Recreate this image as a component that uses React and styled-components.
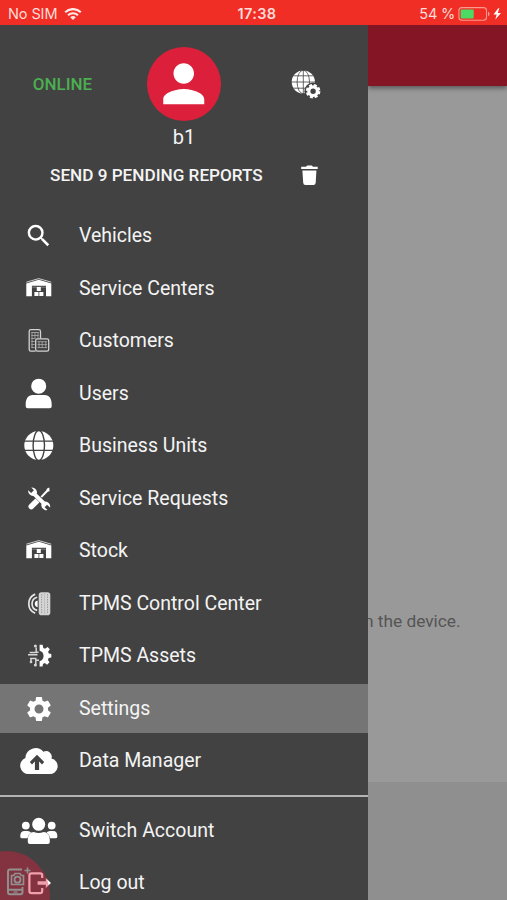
import React from "react";
import styled, { createGlobalStyle } from "styled-components";
import { MdSearch, MdSettings, MdPerson } from "react-icons/md";

const GlobalStyle = createGlobalStyle`
  * {
    box-sizing: border-box;
  }
  body {
    margin: 0;
    background: #999999;
    overflow: hidden;
  }
`;

const Screen = styled.div`
  position: relative;
  width: 507px;
  height: 900px;
  display: flex;
  flex-direction: column;
  overflow: hidden;
  font-family: Roboto, sans-serif;
`;

const StatusBar = styled.div`
  flex: none;
  height: 25px;
  display: grid;
  grid-template-columns: 1fr auto 1fr;
  align-items: center;
  padding: 3px 4px 0 8px;
  background: #f02e25;
  color: #ffdcd8;
  font-family: Inter, sans-serif;
  font-size: 14.5px;
  line-height: 20px;
`;

const StatusSide = styled.div`
  display: flex;
  align-items: center;
  justify-content: ${({ $end }) => ($end ? "flex-end" : "flex-start")};
  gap: ${({ $end }) => ($end ? "3px" : "7px")};
  letter-spacing: ${({ $end }) => ($end ? "-0.2px" : "-0.1px")};
  svg {
    display: block;
  }
`;

const Clock = styled.div`
  font-weight: 600;
  font-size: 14.5px;
  letter-spacing: 0.4px;
  padding-left: 3px;
`;

const Body = styled.div`
  flex: 1;
  min-height: 0;
  display: flex;
`;

const Drawer = styled.aside`
  flex: none;
  width: 368px;
  background: #424242;
  color: #f4f4f4;
  overflow: hidden;
`;

const Profile = styled.div`
  display: grid;
  grid-template-columns: 125px 118px 125px;
  align-items: center;
  justify-items: center;
  height: 73px;
  margin-top: 22px;
`;

const Online = styled.span`
  font-weight: 500;
  font-size: 17px;
  color: #4caf50;
`;

const Avatar = styled.div`
  width: 74px;
  height: 74px;
  border-radius: 50%;
  display: flex;
  align-items: center;
  justify-content: center;
  background: #dc1f3b;
  color: #ffffff;
`;

const UserName = styled.div`
  height: 34px;
  line-height: 34px;
  text-align: center;
  font-size: 20px;
`;

const Pending = styled.div`
  display: flex;
  align-items: center;
  justify-content: space-between;
  height: 42px;
  padding: 0 49px 0 50px;
  font-weight: 500;
  font-size: 17.15px;
`;

const Menu = styled.nav`
  display: flex;
  flex-direction: column;
  gap: 3.5px;
  padding-top: ${({ $top }) => $top}px;
`;

const Item = styled.div`
  flex: none;
  height: 49px;
  display: flex;
  align-items: center;
  gap: 20px;
  padding-left: 19px;
  font-size: 19.5px;
  line-height: 24px;
  background: ${({ $active }) => ($active ? "#757575" : "transparent")};
`;

const IconBox = styled.span`
  flex: none;
  width: 40px;
  height: 40px;
  display: flex;
  align-items: center;
  justify-content: center;
  color: #ffffff;
`;

const Divider = styled.div`
  height: 2px;
  margin-top: 9.5px;
  background: #b4b4b4;
`;

const Content = styled.main`
  flex: 1;
  min-width: 0;
  display: flex;
  flex-direction: column;
  overflow: hidden;
  background: #999999;
`;

const AppBar = styled.div`
  flex: none;
  height: 61px;
  background: #841524;
  box-shadow: 0 2px 5px rgba(0, 0, 0, 0.45);
`;

const Message = styled.div`
  flex: 1;
  padding-top: 524px;
  margin-left: -4px;
  font-size: 17.3px;
  line-height: 22px;
  white-space: nowrap;
  color: #555555;
`;

const Footer = styled.div`
  flex: none;
  height: 118px;
  background: #8f8f8f;
`;

const Fab = styled.div`
  position: absolute;
  left: -38px;
  top: 851px;
  width: 88px;
  height: 88px;
  border-radius: 50%;
  background: #dc1f3b;
  opacity: 0.42;
  svg {
    position: absolute;
    left: 44px;
    top: 16px;
  }
`;

const DARK = "#424242";

const Svg = ({ children, size = 40 }) => (
  <svg width={size} height={size} viewBox={`0 0 ${size} ${size}`} fill="#fff">
    {children}
  </svg>
);

const WarehouseIcon = () => (
  <Svg>
    <path
      d="M7.3 13.2 19.8 9.6l12.5 3.6"
      fill="none"
      stroke="#ccc"
      strokeWidth="1"
    />
    <path d="M7.3 14.4 19.8 10.8l12.5 3.6v12.8H27V16.8H12.9v10.4H7.3z" />
    <path d="M13.2 18.2H27" stroke="#bbb" strokeWidth=".5" />
    <path d="M17.8 18.1h4v3.9h-4zM15.4 22.9h4.1v4.2h-4.1zM20.3 22.9h4.1v4.2h-4.1z" />
  </Svg>
);

const BuildingsIcon = () => (
  <Svg>
    <g fill="none" stroke="#d2d2d2" strokeWidth="1.3">
      <path d="M16.5 30.1h-4.7a1.6 1.6 0 0 1-1.6-1.6V10.4q0-1.7 1.7-1.7h7.9q1.7 0 1.7 1.7v7" />
      <rect x="16.7" y="17.8" width="13" height="12.4" rx="1.7" />
    </g>
    <g stroke="#b0b0b0" strokeWidth=".8">
      <path d="M12.3 11.5h7.4M12.3 14.5h7.4M12.3 17.5h4M12.3 20.5h3.4M12.3 23.5h3.4M12.3 26.5h3.4M13 11v16M16 11v6.5M19 11v6" />
      <path d="M18.5 20.7h9.6M18.5 23.6h9.6M18.5 26.6h9.6M20 20.5v6.5M23.2 20.5v6.5M26.8 20.5v6.5" />
    </g>
  </Svg>
);

const UserIcon = () => (
  <Svg>
    <path d="M6.7 30.4c0-5.8 2.4-9.4 7-9.4h12c4.6 0 7 3.6 7 9.4v1.8q0 2-2 2h-22q-2 0-2-2z" />
    <circle cx="19.7" cy="12.2" r="8.2" stroke={DARK} strokeWidth="1.3" />
  </Svg>
);

const GlobeIcon = () => (
  <Svg>
    <circle cx="19.8" cy="19.5" r="14.5" />
    <g fill="none" stroke={DARK} strokeWidth="1.4">
      <ellipse cx="19.8" cy="19.5" rx="5.7" ry="15" />
      <path d="M5 15.1h29.6M5 24.4h29.6" />
    </g>
  </Svg>
);

const ToolsIcon = () => (
  <Svg>
    <path d="m30.3 8.6-2.2.8-1 2.1-5.6 5.9 1.4 1.3 5.7-5.8 2-1z" />
    <path
      d="m12.3 27.5 5.8-5.8"
      stroke="#fff"
      strokeWidth="5.6"
      strokeLinecap="round"
    />
    <path
      d="M12.3 8.5a5 5 0 0 1 5.5 6.3l8 7.7a5 5 0 0 1 5.3 6l-3.1-2.8-2.4 2.5 2.9 2.8a5 5 0 0 1-6-6.2l-8.1-7.9a5 5 0 0 1-5.2-5.6l2.9 2.6 2.8-2.6z"
      stroke={DARK}
      strokeWidth="1"
      paintOrder="stroke"
    />
  </Svg>
);

const TireIcon = () => (
  <Svg>
    <g fill="none" stroke="#e6e6e6" strokeWidth="1.7">
      <path d="M18.2 13.2a6.8 6.8 0 0 0 0 13.2" />
      <path d="M16.2 10.1a10.4 10.4 0 0 0 0 19.2" />
    </g>
    <path d="M18.6 16.5a3.4 3.4 0 0 0 0 6.7z" />
    <rect x="19.7" y="8.2" width="11.6" height="23" rx="2.8" fill="#d4d4d4" />
    <g stroke="#888" strokeWidth=".7">
      <path d="M22.6 10v19.5M28.5 10v19.5" strokeDasharray="1.5 1" />
      <path d="M25.5 9.5v20.5" strokeDasharray=".8 1.2" />
    </g>
  </Svg>
);

const AssetsIcon = () => (
  <Svg>
    <path d="M20.6 8.8h3l.7 3.2 1.7.8 2.6-1.7 2.2 2.2-1.7 2.5.7 1.8 2.5.4v3.5l-2.6.6-.8 1.8 1.6 2.4-2.4 2.4-2.3-1.6-1.8.8-.5 2.7h-2.9v-5.4a5.4 5.4 0 0 0 0-10.4z" />
    <g fill="none" stroke="#d5d5d5" strokeWidth="1.5">
      <path d="M9 18.8h9.5M10.6 16.4h6.6v-5M19.5 16.2h-2M11 22.5h5.8v5.5M12 22v4M20 24.3h-3" />
      <circle cx="16.4" cy="10" r=".8" />
      <circle cx="16.4" cy="29" r=".8" />
      <circle cx="12" cy="26" r=".6" />
    </g>
  </Svg>
);

const CloudIcon = () => (
  <Svg>
    <path d="M9.6 33A8.3 8.3 0 0 1 6.4 17a10.2 10.2 0 0 1 18-6.2 5.6 5.6 0 0 1 8 6.8A7.8 7.8 0 0 1 30 33z" />
    <path
      d="m18 13.7 7.2 7.4-2.2 2.3-2.9-2.9v8.6h-4.2v-8.6L13 23.4l-2.2-2.3z"
      fill={DARK}
    />
  </Svg>
);

const PeopleIcon = () => (
  <Svg>
    <circle cx="6.8" cy="14.6" r="3.9" />
    <circle cx="32.7" cy="14.6" r="3.9" />
    <path d="M1.3 24.6q0-4.7 4.2-4.7h3q2.5 0 3.5 1.5-3.2 2.5-3.6 5.9H3q-1.7 0-1.7-1.6zM38.3 24.6q0-4.7-4.2-4.7h-3q-2.5 0-3.5 1.5 3.2 2.5 3.6 5.9h5.4q1.7 0 1.7-1.6z" />
    <circle cx="19.7" cy="13.3" r="6.5" />
    <path d="M8.8 29.2c0-5.1 2.3-8.1 6-8.1 3.2 1.2 6.6 1.2 9.8 0 3.7 0 6.2 3 6.2 8.1v1.7q0 2-2 2h-18q-2 0-2-2z" />
  </Svg>
);

const LogoutIcon = () => (
  <Svg>
    <path
      d="M23.2 15v-2.6q0-2.1-2.1-2.1h-8.6q-2.1 0-2.1 2.1v15.6q0 2.1 2.1 2.1h8.6q2.1 0 2.1-2.1V25"
      fill="none"
      stroke="#fff"
      strokeWidth="2.2"
    />
    <path d="M18.6 18.2h8.2v-3.3l5.2 5.1-5.2 5.1v-3.3h-8.2z" />
  </Svg>
);

const GlobeGearIcon = () => (
  <Svg>
    <circle cx="17.3" cy="18" r="11.6" />
    <g fill="none" stroke={DARK} strokeWidth=".8">
      <ellipse cx="17.3" cy="18" rx="6.2" ry="11.8" />
      <path d="M17.3 6v24M5 18h24M7 11.8h20M7 24.2h20" />
    </g>
    <circle cx="27.1" cy="27.2" r="8.7" fill={DARK} />
    <circle
      cx="27.1"
      cy="27.2"
      r="6"
      fill="none"
      stroke="#fff"
      strokeWidth="2.6"
      strokeDasharray="2.9 1.812"
    />
    <circle
      cx="27.1"
      cy="27.2"
      r="4.3"
      fill="none"
      stroke="#fff"
      strokeWidth="3.2"
    />
  </Svg>
);

const TrashIcon = () => (
  <svg width="20" height="22" viewBox="0 0 20 22" fill="#fff">
    <path d="M2.2 2.8H7l1.2-1.2h4.6L14 2.8h4.7V5H2.2zM3.4 6.400h14l-.7 12.400q-.2 2.200-2.300 2.200H6.500q-2.200 0-2.300-2.200z" />
  </svg>
);

const WifiIcon = () => (
  <svg width="18" height="13" viewBox="0 0 18 13" fill="none" stroke="#ffe8e5">
    <path d="M1.2 4.2a11.3 11.3 0 0 1 15.6 0" strokeWidth="2.2" />
    <path d="M4 7.2a7.3 7.3 0 0 1 10 0" strokeWidth="2" />
    <path d="M9 11.9 6.2 9.2a4.1 4.1 0 0 1 5.6 0z" fill="#ffe8e5" stroke="none" />
  </svg>
);

const BatteryIcon = () => (
  <svg width="45" height="15" viewBox="0 0 45 15">
    <rect x=".9" y=".6" width="27.6" height="12.6" rx="3" fill="none" stroke="#f99a90" strokeWidth="1.1" />
    <path d="M30 4.7q1.6.4 1.6 2.2T30 9.1z" fill="#f99a90" />
    <rect x="2.7" y="2.4" width="13" height="9" rx="1" fill="#4cd964" />
    <path d="m40.2 1.3-4.7 6.3h3.2l-1.4 5 5.7-6.6h-3.3l1.7-4.7z" fill="#fff" />
  </svg>
);

const CameraPhoneIcon = () => (
  <svg width="26" height="30" viewBox="0 0 26 30" fill="none" stroke="#fff">
    <path d="M16 2.500H4q-2 0-2 2v20.700q0 2 2 2h10.500q2 0 2-2V20M2 22.700h14.500" strokeWidth="1.9" />
    <path d="M5.5 8.500h2.200l1.300-2h5l1.200 2h2.300v9h-12z" strokeWidth="1.6" />
    <circle cx="11.5" cy="12.7" r="3" strokeWidth="1.8" />
    <path d="M21.500.5v6M18.500 3.500h6" strokeWidth="1.6" />
    <path d="M7.500 25h4" strokeWidth="1.2" />
  </svg>
);

const mainItems = [
  { label: "Vehicles", icon: <MdSearch size={29.5} /> },
  { label: "Service Centers", icon: <WarehouseIcon /> },
  { label: "Customers", icon: <BuildingsIcon /> },
  { label: "Users", icon: <UserIcon /> },
  { label: "Business Units", icon: <GlobeIcon /> },
  { label: "Service Requests", icon: <ToolsIcon /> },
  { label: "Stock", icon: <WarehouseIcon /> },
  { label: "TPMS Control Center", icon: <TireIcon /> },
  { label: "TPMS Assets", icon: <AssetsIcon /> },
  { label: "Settings", icon: <MdSettings size={30} />, active: true },
  { label: "Data Manager", icon: <CloudIcon /> },
];

const accountItems = [
  { label: "Switch Account", icon: <PeopleIcon /> },
  { label: "Log out", icon: <LogoutIcon /> },
];

const MenuList = ({ items, top }) => (
  <Menu $top={top}>
    {items.map(({ label, icon, active }) => (
      <Item key={label} $active={active}>
        <IconBox>{icon}</IconBox>
        <span>{label}</span>
      </Item>
    ))}
  </Menu>
);

const App = () => {
  return (
    <Screen>
      <GlobalStyle />
      <StatusBar>
        <StatusSide>
          <span>No SIM</span>
          <WifiIcon />
        </StatusSide>
        <Clock>17:38</Clock>
        <StatusSide $end>
          <span>54 %</span>
          <BatteryIcon />
        </StatusSide>
      </StatusBar>
      <Body>
        <Drawer>
          <Profile>
            <Online>ONLINE</Online>
            <Avatar>
              <MdPerson size={61.5} />
            </Avatar>
            <GlobeGearIcon />
          </Profile>
          <UserName>b1</UserName>
          <Pending>
            <span>SEND 9 PENDING REPORTS</span>
            <TrashIcon />
          </Pending>
          <MenuList items={mainItems} top={15.5} />
          <Divider />
          <MenuList items={accountItems} top={9} />
        </Drawer>
        <Content>
          <AppBar />
          <Message>n the device.</Message>
          <Footer />
        </Content>
      </Body>
      <Fab>
        <CameraPhoneIcon />
      </Fab>
    </Screen>
  );
};

export default App;
